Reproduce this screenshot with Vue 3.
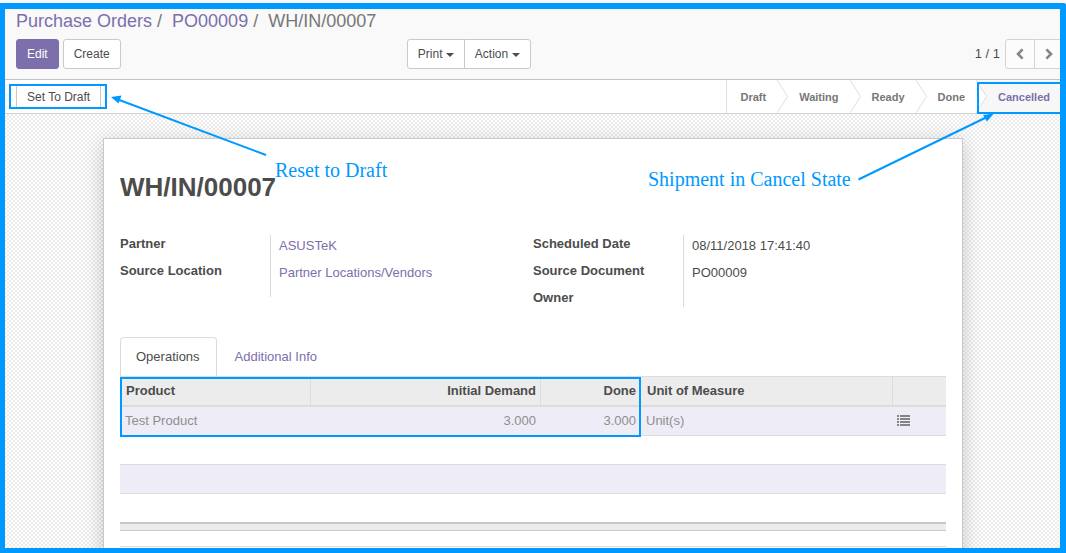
<script setup>
const stages = ['Draft', 'Waiting', 'Ready', 'Done', 'Cancelled']
const active = 'Cancelled'
</script>

<template>
  <div class="page">
    <div class="frame">
      <header class="control-panel">
        <nav aria-label="Breadcrumb">
          <ol class="breadcrumb">
            <li><a href="#">Purchase Orders</a></li>
            <li><a href="#">PO00009</a></li>
            <li>WH/IN/00007</li>
          </ol>
        </nav>
        <div class="panel-row">
          <div class="panel-left">
            <div class="buttons">
              <button type="button" class="btn primary">Edit</button>
              <button type="button" class="btn">Create</button>
            </div>
            <div class="group">
              <button type="button" class="btn">Print <i class="caret"></i></button>
              <button type="button" class="btn">Action <i class="caret"></i></button>
            </div>
          </div>
          <div class="pager">
            <span>1 / 1</span>
            <div class="group">
              <button type="button" class="btn step" aria-label="Previous">
                <svg width="8" height="12" viewBox="0 0 8 12"><path d="M6.6 1.4 2 6l4.600 4.600" /></svg>
              </button>
              <button type="button" class="btn step" aria-label="Next">
                <svg width="8" height="12" viewBox="0 0 8 12"><path d="M1.400 1.400 6 6l-4.600 4.600" /></svg>
              </button>
            </div>
          </div>
        </div>
      </header>

      <div class="statusbar">
        <div class="draft-action">
          <button type="button">Set To Draft</button>
          <span class="mark"></span>
        </div>
        <ol class="stages">
          <li v-for="(s, i) in stages" :key="s" :class="{ active: s === active }">
            <svg v-if="i" class="chevron" viewBox="0 0 11 33" preserveAspectRatio="none">
              <path class="fill" d="M0 0 10.500 16.500 0 33z" />
              <path class="edge" d="M0 0 10.500 16.500 0 33" />
            </svg>
            {{ s }}
            <span v-if="s === active" class="mark"></span>
          </li>
        </ol>
      </div>

      <main class="canvas">
        <section class="sheet">
          <h1>WH/IN/00007</h1>
          <div class="groups">
            <dl>
              <dt>Partner</dt>
              <dd><a href="#">ASUSTeK</a></dd>
              <dt>Source Location</dt>
              <dd class="tail"><a href="#">Partner Locations/Vendors</a></dd>
            </dl>
            <dl>
              <dt>Scheduled Date</dt>
              <dd>08/11/2018 17:41:40</dd>
              <dt>Source Document</dt>
              <dd>PO00009</dd>
              <dt>Owner</dt>
              <dd class="blank"></dd>
            </dl>
          </div>
          <div class="tabs" role="tablist">
            <button type="button" role="tab" aria-selected="true">Operations</button>
            <button type="button" role="tab" aria-selected="false">Additional Info</button>
          </div>
          <div class="lines">
            <table>
              <colgroup>
                <col class="c-product" /><col class="c-demand" /><col class="c-done" /><col /><col class="c-icon" />
              </colgroup>
              <thead>
                <tr>
                  <th>Product</th>
                  <th class="num">Initial Demand</th>
                  <th class="num">Done</th>
                  <th>Unit of Measure</th>
                  <th></th>
                </tr>
              </thead>
              <tbody>
                <tr>
                  <td>Test Product</td>
                  <td class="num">3.000</td>
                  <td class="num">3.000</td>
                  <td>Unit(s)</td>
                  <td class="icon-cell">
                    <button type="button" class="detail" aria-label="Details">
                      <svg width="13" height="11" viewBox="0 0 13 11">
                        <path d="M0 0h2v2H0zM3 0h10v2H3zM0 3h2v2H0zM3 3h10v2H3zM0 6h2v2H0zM3 6h10v2H3zM0 9h2v2H0zM3 9h10v2H3z" />
                      </svg>
                    </button>
                  </td>
                </tr>
                <tr v-for="n in 3" :key="n"><td colspan="5"></td></tr>
              </tbody>
              <tfoot>
                <tr><td colspan="5"></td></tr>
              </tfoot>
            </table>
            <span class="mark"></span>
          </div>
          <hr />
        </section>
      </main>
    </div>

    <svg class="arrows" aria-hidden="true">
      <path class="shaft" d="M266 155 118 99.500M858.500 179.500 986 117.500" />
      <path class="head" d="M111 97 121.500 95.500 118.500 103.500zM994 113.500 983 115 987 121.500z" />
    </svg>
    <span class="note reset">Reset to Draft</span>
    <span class="note cancel">Shipment in Cancel State</span>
  </div>
</template>

<style>
body {
  margin: 0;
}
</style>

<style scoped>
* {
  box-sizing: border-box;
}
.page {
  position: relative;
  display: flex;
  flex-direction: column;
  height: 100vh;
  padding-top: 3px;
  overflow: hidden;
  background: #f9f9f9;
  color: #4c4c4c;
  font: 13px/18px "Liberation Sans", Arial, sans-serif;
}
.frame {
  flex: 1;
  min-height: 0;
  display: flex;
  flex-direction: column;
  overflow: hidden;
  border: solid #0099ff;
  border-width: 6px 6px 5px 5px;
  border-top-right-radius: 2px;
}
a {
  color: #7c6fab;
  text-decoration: none;
}
button {
  font: inherit;
  color: inherit;
  margin: 0;
}
ol {
  list-style: none;
  margin: 0;
  padding: 0;
}
.control-panel {
  flex: none;
  padding: 0 0 10px 11px;
  border-bottom: 1px solid #c3c3c3;
  background: #f9f9f9;
}
.breadcrumb {
  display: flex;
  font-size: 18px;
  line-height: 24px;
  color: #777;
}
.breadcrumb li + li::before {
  content: "/";
  padding: 0 10px 0 5px;
}
.panel-row {
  display: grid;
  grid-template-columns: 1fr 1fr;
  margin: 6px 0 0 -11px;
}
.panel-left {
  display: flex;
  justify-content: space-between;
  padding: 0 2px 0 11px;
}
.buttons {
  display: flex;
  gap: 4px;
}
.group {
  display: flex;
}
.btn {
  height: 30px;
  padding: 0 10px;
  border: 1px solid #c9c9c9;
  border-radius: 3px;
  background: #fff;
  font-size: 12px;
}
.btn.primary {
  border-color: #7c6fab;
  background: #7c6fab;
  color: #fff;
}
.group .btn:first-child {
  border-radius: 3px 0 0 3px;
}
.group .btn:last-child {
  margin-left: -1px;
  border-radius: 0 3px 3px 0;
}
.caret {
  display: inline-block;
  vertical-align: middle;
  border: 4px solid transparent;
  border-top-color: #4c4c4c;
  border-bottom: 0;
}
.pager {
  display: flex;
  justify-content: flex-end;
  align-items: center;
  gap: 5px;
  margin-right: -4px;
}
.btn.step {
  width: 30px;
  padding: 0;
  background: #fcfcfc;
  border-color: #d3d3d3;
}
.step svg {
  display: block;
  margin: 0 auto;
  fill: none;
  stroke: #858585;
  stroke-width: 2.600;
}
.statusbar {
  flex: none;
  display: flex;
  justify-content: space-between;
  height: 34px;
  padding-left: 11px;
  border-bottom: 1px solid #d4d4d4;
  background: #fff;
}
.mark {
  position: absolute;
  border: 2px solid #0099ff;
  pointer-events: none;
}
.draft-action {
  position: relative;
  align-self: flex-start;
  margin-top: 4px;
}
.draft-action button {
  display: block;
  height: 25px;
  padding: 0 10px;
  border: 1px solid #c9c9c9;
  background: #fff;
  font-size: 12px;
}
.draft-action .mark {
  inset: 0 -6px 0 -7px;
}
.stages {
  display: flex;
  border-left: 1px solid #dedede;
  font-size: 11px;
  font-weight: bold;
  line-height: 34px;
  color: #777;
}
.stages li {
  position: relative;
  padding: 0 11px 0 22px;
}
.stages li:first-child {
  padding-left: 14px;
}
.stages .active {
  padding-right: 10px;
  background: #f7f7f7;
  color: #7c6fab;
}
.chevron {
  position: absolute;
  left: 0;
  top: 0;
  width: 11px;
  height: 100%;
}
.chevron .fill {
  fill: #fff;
}
.chevron .edge {
  fill: none;
  stroke: #dedede;
}
.stages .mark {
  inset: 2px -2px -1px 1px;
}
.canvas {
  flex: 1;
  min-height: 0;
  overflow: hidden;
  padding: 24px 0 0 1px;
  background: repeating-conic-gradient(#ececec 0 25%, #fff 0 50%) 0 0 / 4px 4px;
}
.sheet {
  max-width: 860px;
  min-height: 600px;
  margin: 0 auto;
  padding: 32px 16px;
  border: 1px solid #c8c8d3;
  background: #fff;
  box-shadow: 0 5px 20px rgba(0, 0, 0, 0.2);
}
h1 {
  margin: 0 0 32px;
  font-size: 26px;
  line-height: 32px;
}
.groups {
  display: grid;
  grid-template-columns: 1fr 1fr;
  align-items: start;
}
dl {
  display: grid;
  grid-template-columns: 150px 1fr;
  margin: 0;
}
dt {
  font-weight: bold;
}
dd {
  margin: 0;
  padding: 2px 0 7px 8px;
  border-left: 1px solid #dcdcdc;
}
dd.tail {
  padding-bottom: 15px;
}
dd.blank {
  padding: 0;
}
.tabs {
  display: flex;
  margin-top: 30px;
}
.tabs button {
  height: 39px;
  padding: 0 15px;
  border: 1px solid transparent;
  border-bottom: 0;
  border-radius: 4px 4px 0 0;
  background: none;
}
.tabs button[aria-selected="true"] {
  height: 40px;
  margin-bottom: -1px;
  padding: 0 16px 2px 15px;
  position: relative;
  border-color: #dcdcdc;
  background: #fff;
}
.tabs button[aria-selected="false"] {
  margin-left: 2px;
  color: #7c6fab;
}
.lines {
  position: relative;
  border-top: 1px solid #dcdcdc;
}
table {
  width: 100%;
  table-layout: fixed;
  border-collapse: separate;
  border-spacing: 0;
}
.c-product {
  width: 191px;
}
.c-demand {
  width: 230px;
}
.c-done {
  width: 100px;
}
.c-icon {
  width: 53px;
}
th,
td {
  padding: 0 5px;
  text-align: left;
}
th {
  height: 30px;
  padding-left: 6px;
  border-right: 1px solid #dcdcdc;
  border-bottom: 2px solid #dcdcdc;
  background: #ececec;
}
th:last-child {
  border-right: 0;
}
.num {
  text-align: right;
}
th.num {
  padding-right: 4px;
}
tbody td {
  height: 29px;
  border-bottom: 1px solid #dcdcdc;
  color: #8f8f8f;
}
tbody tr:nth-child(odd) td {
  background: #eeecf7;
}
tbody tr:last-child td {
  height: 28px;
  border-bottom: 0;
}
tbody .icon-cell {
  padding: 0 4px 2px;
}
tfoot td {
  height: 9px;
  border-top: 2px solid #c8c8c8;
  border-bottom: 1px solid #c8c8c8;
  background: #ececec;
}
.detail {
  display: block;
  padding: 0;
  border: 0;
  background: none;
}
.detail svg {
  display: block;
  fill: #858585;
}
.lines .mark {
  top: 0;
  left: 0;
  width: 521px;
  height: 60px;
}
hr {
  margin: 15px 0 0;
  border: 0;
  border-top: 1px solid #dcdcdc;
}
.arrows {
  position: absolute;
  inset: 0;
  width: 100%;
  height: 100%;
  pointer-events: none;
}
.shaft {
  fill: none;
  stroke: #0099ff;
  stroke-width: 2;
}
.head {
  fill: #0099ff;
}
.note {
  position: absolute;
  color: #0099ff;
  font: 20px/24px "Liberation Serif", "Times New Roman", serif;
  white-space: nowrap;
}
.reset {
  left: 275px;
  top: 158px;
}
.cancel {
  left: 648px;
  top: 167px;
}
</style>
